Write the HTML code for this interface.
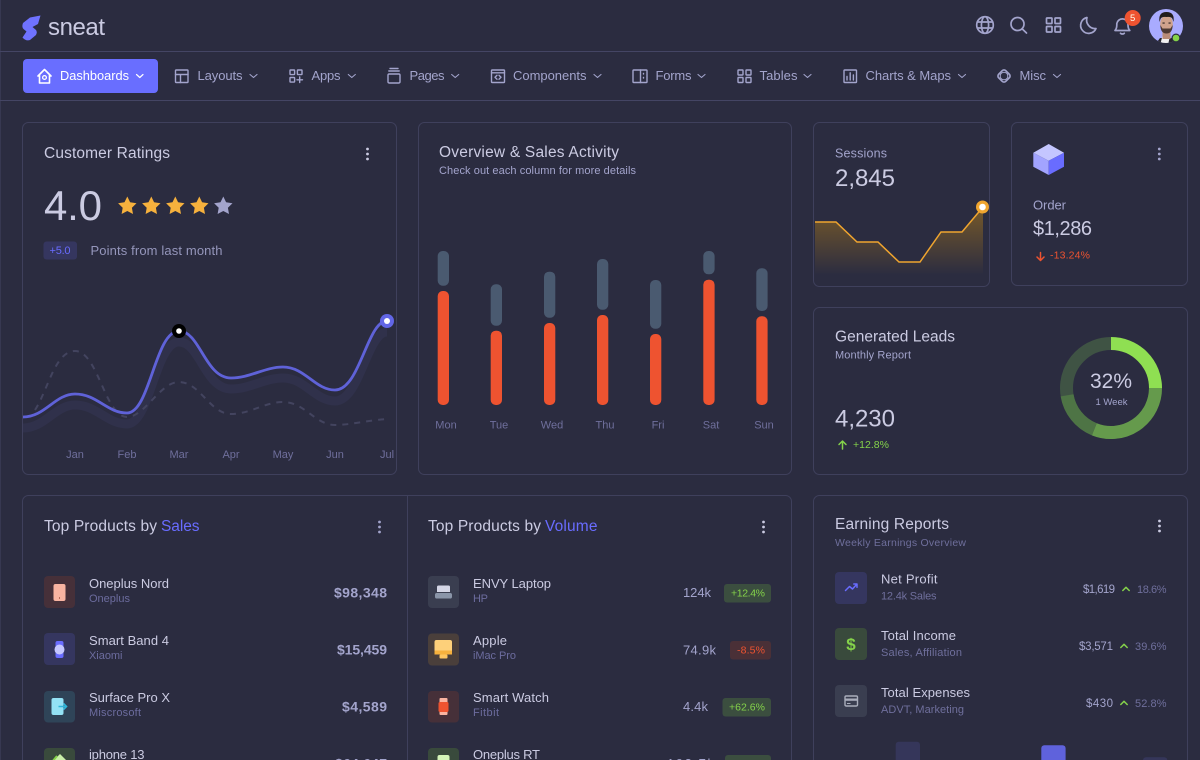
<!DOCTYPE html>
<html lang="en">
<head>
<meta charset="utf-8">
<title>Sneat Dashboard</title>
<style>
html,body{margin:0;padding:0;width:1200px;height:760px;overflow:hidden;background:#2b2c40}
svg{display:block}
text{font-family:"Liberation Sans",sans-serif;fill:#cbcbe2}
.card{fill:#2b2c40;stroke:#3f405c;stroke-width:1}
.nav{font-size:13px;fill:#a3a4cc}
.ic{fill:none;stroke:#a3a4cc;stroke-width:1.4;stroke-linecap:round;stroke-linejoin:round}
.top{fill:none;stroke:#a3a4cc;stroke-width:1.7;stroke-linecap:round;stroke-linejoin:round}
.chev{fill:none;stroke:#a3a4cc;stroke-width:1.1;stroke-linecap:round;stroke-linejoin:round}
.title{font-size:15.5px;fill:#cbcbe2}
.name{font-size:13px;fill:#cbcbe2}
.sub{font-size:11px;fill:#6c6c9e}
.axis{font-size:11px;fill:#6f6f9c}
.price{font-size:14px;font-weight:bold;fill:#a3a4cc}
.val{font-size:13px;fill:#a3a4cc}
.small{font-size:11.5px;fill:#a3a4cc}
.pct{font-size:11px;fill:#6f6f9c}
.g{font-size:10.5px;fill:#84d24a}
.r{font-size:10.5px;fill:#ee5330}
.up{fill:none;stroke:#84d24a;stroke-width:1.5;stroke-linecap:round;stroke-linejoin:round}
</style>
</head>
<body>
<svg width="1200" height="760" viewBox="0 0 1200 760" xmlns="http://www.w3.org/2000/svg">
<defs>
<linearGradient id="amber" x1="0" y1="0" x2="0" y2="1">
<stop offset="0" stop-color="#ffab00" stop-opacity=".36"/>
<stop offset="1" stop-color="#ffab00" stop-opacity="0"/>
</linearGradient>
<clipPath id="c1"><rect x="23" y="260" width="373" height="214"/></clipPath>
<clipPath id="av"><circle cx="1166" cy="26" r="17"/></clipPath>
</defs>

<rect width="1200" height="760" fill="#2b2c40"/>
<rect x="0" y="0" width="1" height="760" fill="#373851"/>
<rect x="0" y="51" width="1200" height="1" fill="#444564"/>
<rect x="0" y="100" width="1200" height="1" fill="#444564"/>

<!-- logo -->
<path d="M30 17.500L40.500 15.500L38 24L32.500 27L36 30Q37.500 32 36 35L30 40Q26 41.500 22.500 37.500L26.500 31.500L23.500 29Q21.500 27 23 23Z" fill="#6f72ff"/>
<text x="48" y="35" font-size="24" textLength="57">sneat</text>

<!-- top icons -->
<g class="top">
<circle cx="985" cy="25" r="8.300"/>
<ellipse cx="985" cy="25" rx="3.600" ry="8.300"/>
<path d="M977.500 22H992.500M977.500 28H992.500"/>
<circle cx="1017.500" cy="24" r="6.500"/>
<path d="M1022.300 29L1026.500 33"/>
<rect x="1046.500" y="18" width="5.500" height="5.500" rx=".6"/>
<rect x="1055" y="18" width="5.500" height="5.500" rx=".6"/>
<rect x="1046.500" y="26.500" width="5.500" height="5.500" rx=".6"/>
<rect x="1055" y="26.500" width="5.500" height="5.500" rx=".6"/>
<path d="M1087 17.500A8 8 0 1 0 1096 28.500A8.500 8.500 0 0 1 1087 17.500Z"/>
<path d="M1115 30.500Q1116.800 28.500 1116.800 25V23.500A5.700 5.700 0 0 1 1128 23.500V25Q1128 28.500 1129.800 30.500ZM1120.500 33.300Q1122.400 34.800 1124.300 33.300"/>
</g>
<circle cx="1132.700" cy="18" r="8" fill="#ee5330"/>
<text x="1132.700" y="21" font-size="9.500" text-anchor="middle" style="fill:#ffe">5</text>

<!-- avatar -->
<circle cx="1166" cy="26" r="17" fill="#a9abff"/>
<g clip-path="url(#av)">
<path d="M1155 45L1160 38H1173L1178 45Z" fill="#26242c"/>
<path d="M1162.500 36L1160 45H1168L1170 36Z" fill="#f0f0f0"/>
<rect x="1162.500" y="30" width="8" height="9" fill="#b98c78"/>
<ellipse cx="1166.500" cy="24" rx="6.300" ry="8.800" fill="#cfa28c"/>
<path d="M1159.500 22Q1158 12 1166.500 12Q1175 12 1173.500 22L1172.500 19Q1171.500 16.500 1166.500 17Q1161.500 16.500 1160.500 19Z" fill="#211c1d"/>
<path d="M1160.300 25Q1160.500 33.500 1166.500 33.500Q1172.500 33.500 1172.700 25L1170.500 28.500H1162.500Z" fill="#4d3a33"/>
<rect x="1162.500" y="22.500" width="2.200" height="1.100" fill="#2a211e"/>
<rect x="1168.500" y="22.500" width="2.200" height="1.100" fill="#2a211e"/>
</g>
<circle cx="1176" cy="38" r="4.500" fill="#2b2c40"/>
<circle cx="1176" cy="38" r="3.300" fill="#84d24a"/>

<!-- nav -->
<rect x="23" y="59" width="135" height="34" rx="4" fill="#696eff"/>
<path d="M38 76L44.500 69.500L51 76M39.500 75V83H49.500V75" fill="none" stroke="#fff" stroke-width="1.600" stroke-linejoin="round" stroke-linecap="round"/>
<circle cx="44.500" cy="77.500" r="1.900" fill="none" stroke="#fff" stroke-width="1.300"/>
<text x="60" y="80" font-size="12.800" textLength="69" style="fill:#fff">Dashboards</text>
<path d="M136.500 74.500L139.800 77.500L143 74.500" fill="none" stroke="#fff" stroke-width="1.200" stroke-linecap="round" stroke-linejoin="round"/>

<g class="ic">
<rect x="175.500" y="70" width="12.500" height="12.500" rx=".8"/><path d="M175.500 74.500H188M180.500 74.500V82.500"/>
<rect x="290" y="70" width="4.600" height="4.600" rx=".5"/><rect x="297.400" y="70" width="4.600" height="4.600" rx=".5"/><rect x="290" y="77.500" width="4.600" height="4.600" rx=".5"/><path d="M299.700 77V82.500M297 79.800H302.500"/>
<path d="M390 68.500H398M388.800 71H399.200"/><rect x="388" y="74" width="12" height="9" rx="1.200"/>
<rect x="491.500" y="70" width="13" height="12.500" rx=".8"/><path d="M491.500 72.800H504.500M497 75.200L495 77.200L497 79.200M499 75.200L501 77.200L499 79.200"/>
<rect x="633" y="70" width="14" height="12.500" rx=".8"/><path d="M640.500 70V82.500M643.500 73.500V74M643.500 77.500V78"/>
<rect x="738" y="70" width="5" height="5" rx=".5"/><rect x="746" y="70" width="5" height="5" rx=".5"/><rect x="738" y="77.500" width="5" height="5" rx=".5"/><rect x="746" y="77.500" width="5" height="5" rx=".5"/>
<rect x="844" y="70" width="12.500" height="12.500" rx=".8"/><path d="M847 80V76.500M850.200 80V72.800M853.400 80V75"/>
<rect x="999" y="71" width="10" height="10" rx="2.500" transform="rotate(45 1004 76)" stroke-width="1.700"/>
<circle cx="1004" cy="76" r="3.800" stroke-width="1"/>
</g>
<text class="nav" x="197.500" y="80" textLength="45">Layouts</text>
<text class="nav" x="311.500" y="80" textLength="29">Apps</text>
<text class="nav" x="409.500" y="80" textLength="35">Pages</text>
<text class="nav" x="513" y="80" textLength="73.500">Components</text>
<text class="nav" x="655.500" y="80" textLength="36">Forms</text>
<text class="nav" x="759.500" y="80" textLength="38">Tables</text>
<text class="nav" x="865.500" y="80" textLength="85.500">Charts &amp; Maps</text>
<text class="nav" x="1019.500" y="80" textLength="26.500">Misc</text>
<g class="chev">
<path d="M250 74.500L253.500 77.500L257 74.500M348.300 74.500L351.800 77.500L355.300 74.500M451.700 74.500L455.200 77.500L458.700 74.500M594 74.500L597.500 77.500L601 74.500M698 74.500L701.500 77.500L705 74.500M804 74.500L807.500 77.500L811 74.500M958.500 74.500L962 77.500L965.500 74.500M1053.500 74.500L1057 77.500L1060.500 74.500"/>
</g>

<!-- cards -->
<rect class="card" x="22.500" y="122.500" width="374" height="352" rx="6"/>
<rect class="card" x="418.500" y="122.500" width="373" height="352" rx="6"/>
<rect class="card" x="813.500" y="122.500" width="176" height="164" rx="6"/>
<rect class="card" x="1011.500" y="122.500" width="176" height="163" rx="6"/>
<rect class="card" x="813.500" y="307.500" width="374" height="167" rx="6"/>
<rect class="card" x="22.500" y="495.500" width="769" height="290" rx="6"/>
<rect x="407" y="496" width="1" height="264" fill="#3f405c"/>
<rect class="card" x="813.500" y="495.500" width="374" height="290" rx="6"/>

<!-- customer ratings -->
<text class="title" x="44" y="158" textLength="126">Customer Ratings</text>
<g fill="#cbcbe2"><circle cx="367.500" cy="149" r="1.400"/><circle cx="367.500" cy="154" r="1.400"/><circle cx="367.500" cy="159" r="1.400"/></g>
<text x="44" y="220" font-size="42" textLength="58">4.0</text>
<g>
<path d="M127.300 196.500L130.100 202.300L136.500 203.200L131.900 207.700L133 214L127.300 211L121.600 214L122.700 207.700L118.100 203.200L124.500 202.300Z" fill="#f6b13d"/>
<path transform="translate(24 0)" d="M127.300 196.500L130.100 202.300L136.500 203.200L131.900 207.700L133 214L127.300 211L121.600 214L122.700 207.700L118.100 203.200L124.500 202.300Z" fill="#f6b13d"/>
<path transform="translate(48 0)" d="M127.300 196.500L130.100 202.300L136.500 203.200L131.900 207.700L133 214L127.300 211L121.600 214L122.700 207.700L118.100 203.200L124.500 202.300Z" fill="#f6b13d"/>
<path transform="translate(72 0)" d="M127.300 196.500L130.100 202.300L136.500 203.200L131.900 207.700L133 214L127.300 211L121.600 214L122.700 207.700L118.100 203.200L124.500 202.300Z" fill="#f6b13d"/>
<path transform="translate(96 0)" d="M127.300 196.500L130.100 202.300L136.500 203.200L131.900 207.700L133 214L127.300 211L121.600 214L122.700 207.700L118.100 203.200L124.500 202.300Z" fill="#a3a4cc"/>
</g>
<rect x="43.500" y="241.500" width="33.500" height="18" rx="3" fill="#35365f"/>
<text x="49.500" y="254" font-size="11" textLength="21" style="fill:#696cff">+5.0</text>
<text x="90.500" y="255" font-size="13" textLength="132" style="fill:#9596bb">Points from last month</text>

<g clip-path="url(#c1)">
<path d="M23 417C45 417 55 394 75 394C97 394 107 413 127 413C150 413 155 331 179 331C200 331 205 378 231 378C250 378 265 367 283 367C305 367 315 390 335 390C360 390 367 321 387 321" transform="translate(0 11)" fill="none" stroke="#30314b" stroke-width="9"/>
<path d="M35 410C48 390 55 351 75 351C98 351 105 417 127 417C145 417 160 382 179 382C200 382 210 414 231 414C250 414 265 402 283 402C305 402 315 425 335 425C350 425 370 420 387 419" fill="none" stroke="#43445f" stroke-width="2" stroke-dasharray="6 6"/>
<path d="M23 417C45 417 55 394 75 394C97 394 107 413 127 413C150 413 155 331 179 331C200 331 205 378 231 378C250 378 265 367 283 367C305 367 315 390 335 390C360 390 367 321 387 321" fill="none" stroke="#5f62d8" stroke-width="2.800"/>
</g>
<circle cx="179" cy="331" r="7" fill="#000"/><circle cx="179" cy="331" r="2.800" fill="#fff"/>
<circle cx="387" cy="321" r="7" fill="#6266e6"/><circle cx="387" cy="321" r="3" fill="#fff"/>
<g text-anchor="middle">
<text class="axis" x="75" y="458">Jan</text><text class="axis" x="127" y="458">Feb</text><text class="axis" x="179" y="458">Mar</text><text class="axis" x="231" y="458">Apr</text><text class="axis" x="283" y="458">May</text><text class="axis" x="335" y="458">Jun</text><text class="axis" x="387" y="458">Jul</text>
</g>

<!-- overview -->
<text class="title" x="439" y="157" textLength="180">Overview &amp; Sales Activity</text>
<text x="439" y="174" font-size="11" textLength="197" style="fill:#a3a4cc">Check out each column for more details</text>
<g fill="#4a5a70">
<rect x="437.700" y="251" width="11.300" height="34.700" rx="5"/>
<rect x="490.700" y="284.300" width="11.300" height="41.400" rx="5"/>
<rect x="544" y="271.700" width="11.300" height="46" rx="5"/>
<rect x="597" y="259" width="11.300" height="50.700" rx="5"/>
<rect x="650" y="280" width="11.300" height="48.700" rx="5"/>
<rect x="703.300" y="251" width="11.300" height="23.300" rx="5"/>
<rect x="756.300" y="268.300" width="11.300" height="42.700" rx="5"/>
</g>
<g fill="#ee5330">
<rect x="437.700" y="291" width="11.300" height="114" rx="5"/>
<rect x="490.700" y="330.700" width="11.300" height="74.300" rx="5"/>
<rect x="544" y="323" width="11.300" height="82" rx="5"/>
<rect x="597" y="315" width="11.300" height="90" rx="5"/>
<rect x="650" y="334" width="11.300" height="71" rx="5"/>
<rect x="703.300" y="279.700" width="11.300" height="125.300" rx="5"/>
<rect x="756.300" y="316.300" width="11.300" height="88.700" rx="5"/>
</g>
<g text-anchor="middle">
<text class="axis" x="446" y="428.500">Mon</text><text class="axis" x="499" y="428.500">Tue</text><text class="axis" x="552" y="428.500">Wed</text><text class="axis" x="605" y="428.500">Thu</text><text class="axis" x="658" y="428.500">Fri</text><text class="axis" x="711" y="428.500">Sat</text><text class="axis" x="764" y="428.500">Sun</text>
</g>

<!-- sessions -->
<text x="835" y="157.500" font-size="12.500" textLength="52" style="fill:#a3a4cc">Sessions</text>
<text x="835" y="186" font-size="24" textLength="60">2,845</text>
<path d="M815 222H836L857 242H878L899 262H920L941 232H962L983 207V275H815Z" fill="url(#amber)"/>
<path d="M815 222H836L857 242H878L899 262H920L941 232H962L983 207" fill="none" stroke="#f0a52f" stroke-width="1.500"/>
<circle cx="982.500" cy="207" r="6.500" fill="#f0a52f"/><circle cx="982.500" cy="207" r="3.300" fill="#fff"/>

<!-- order -->
<path d="M1048.700 144L1064 152.700L1048.700 160.700L1033.300 152.700Z" fill="#c4c6ff"/>
<path d="M1033.300 152.700L1048.700 160.700V175L1033.300 166.700Z" fill="#a2a4ff"/>
<path d="M1064 152.700L1048.700 160.700V175L1064 166.700Z" fill="#696cff"/>
<g fill="#a3a4cc"><circle cx="1159.300" cy="149" r="1.400"/><circle cx="1159.300" cy="154" r="1.400"/><circle cx="1159.300" cy="159" r="1.400"/></g>
<text x="1033" y="209.500" font-size="13" textLength="33" style="fill:#a3a4cc">Order</text>
<text x="1033" y="235" font-size="20" textLength="59">$1,286</text>
<path d="M1040.500 252.500V260.500M1037 257L1040.500 260.500L1044 257" fill="none" stroke="#ee5330" stroke-width="1.500" stroke-linecap="round" stroke-linejoin="round"/>
<text class="r" x="1050" y="258.700" textLength="40">-13.24%</text>

<!-- leads -->
<text class="title" x="835" y="341.700" textLength="120">Generated Leads</text>
<text x="835" y="358.700" font-size="11" textLength="76" style="fill:#a3a4cc">Monthly Report</text>
<text x="835" y="426.700" font-size="24" textLength="60">4,230</text>
<path d="M842.500 449V441M839 444.500L842.500 441L846 444.500" class="up"/>
<text class="g" x="853" y="448" textLength="36">+12.8%</text>
<g fill="none" stroke-width="13">
<circle cx="1111" cy="388" r="44.500" stroke="#3f5344"/>
<path d="M1111 343.500A44.500 44.500 0 0 1 1155.500 388" stroke="#8fdf52"/>
<path d="M1155.500 388A44.500 44.500 0 0 1 1094.300 429.300" stroke="#659a4c"/>
<path d="M1094.300 429.300A44.500 44.500 0 0 1 1067.100 395.300" stroke="#4e7445"/>
</g>
<text x="1090" y="388" font-size="21" textLength="42">32%</text>
<text x="1111.500" y="405" font-size="9.500" text-anchor="middle" style="fill:#a3a4cc">1 Week</text>

<!-- top products -->
<text class="title" x="44" y="531" textLength="113">Top Products by</text>
<text class="title" x="161" y="531" textLength="38.500" style="fill:#696cff">Sales</text>
<g fill="#a3a4cc"><circle cx="379.500" cy="522" r="1.400"/><circle cx="379.500" cy="527" r="1.400"/><circle cx="379.500" cy="532" r="1.400"/></g>
<text class="title" x="428" y="531" textLength="113">Top Products by</text>
<text class="title" x="545" y="531" textLength="52.500" style="fill:#696cff">Volume</text>
<g fill="#cbcbe2"><circle cx="763.500" cy="522" r="1.400"/><circle cx="763.500" cy="527" r="1.400"/><circle cx="763.500" cy="532" r="1.400"/></g>

<rect x="44" y="576" width="31" height="32" rx="4" fill="#463039"/>
<rect x="53.500" y="584" width="12" height="17" rx="2" fill="#f9b4a1"/><rect x="59" y="597" width="1" height="2" fill="#b96b58"/>
<rect x="44" y="633" width="31" height="32" rx="4" fill="#35365f"/>
<rect x="55.500" y="641" width="8" height="17" rx="2" fill="#696cff"/><circle cx="59.500" cy="649.500" r="5" fill="#c4c6ff"/>
<rect x="44" y="691" width="31" height="31.500" rx="4" fill="#2f4458"/>
<rect x="51.500" y="698" width="12" height="17" rx="2" fill="#93e2f5"/><path d="M58.500 706.500H66M63.500 703.500L66.500 706.500L63.500 709.500" fill="none" stroke="#30b6d9" stroke-width="1.600"/>
<rect x="44" y="748" width="31" height="32" rx="4" fill="#394a3c"/>
<path d="M52 762L60 754L68 762Z" fill="#c9efa8"/><path d="M52 762L57 756" stroke="#84d24a" stroke-width="2"/>

<text class="name" x="89" y="588" textLength="80">Oneplus Nord</text><text class="sub" x="89" y="602" textLength="41">Oneplus</text>
<text class="name" x="89" y="645" textLength="80">Smart Band 4</text><text class="sub" x="89" y="659" textLength="33.500">Xiaomi</text>
<text class="name" x="89" y="702" textLength="81">Surface Pro X</text><text class="sub" x="89" y="716" textLength="52">Miscrosoft</text>
<text class="name" x="89" y="759" textLength="55.500">iphone 13</text>
<text class="price" x="334" y="597.500" textLength="53">$98,348</text>
<text class="price" x="337" y="654.500" textLength="50">$15,459</text>
<text class="price" x="342" y="711.500" textLength="45">$4,589</text>
<text class="price" x="335" y="768.500" textLength="52">$64,647</text>

<rect x="428" y="576" width="31" height="32" rx="4" fill="#3a3e50"/>
<path d="M437 592V587Q437 585.500 438.500 585.500H448.500Q450 585.500 450 587V592Z" fill="#d4d6e6"/><rect x="435" y="593" width="17" height="5.500" rx="1.800" fill="#8a95a8"/>
<rect x="428" y="633.500" width="31" height="32" rx="4" fill="#4a3f3b"/>
<path d="M434.500 642Q434.500 640 436.500 640H450Q452 640 452 642V650.500H434.500Z" fill="#fdd07a"/><rect x="434.500" y="650.500" width="17.500" height="4" fill="#f6b13d"/><rect x="439.500" y="654.500" width="8" height="4" rx="1" fill="#fdc560"/>
<rect x="428" y="691" width="31" height="31.500" rx="4" fill="#463039"/>
<rect x="439.500" y="698" width="8" height="17" rx="1" fill="#f9b4a1"/><rect x="438.500" y="702" width="10" height="10" rx="1.500" fill="#ee5330"/>
<rect x="428" y="748" width="31" height="32" rx="4" fill="#394a3c"/>
<rect x="437.500" y="755" width="12" height="15" rx="2" fill="#d4f5b8"/>

<text class="name" x="473" y="588" textLength="78">ENVY Laptop</text><text class="sub" x="473" y="602" textLength="15">HP</text>
<text class="name" x="473" y="645" textLength="34">Apple</text><text class="sub" x="473" y="659" textLength="43">iMac Pro</text>
<text class="name" x="473" y="702" textLength="76">Smart Watch</text><text class="sub" x="473" y="716" textLength="26">Fitbit</text>
<text class="name" x="473" y="759" textLength="67">Oneplus RT</text>
<text class="val" x="683" y="597" textLength="28">124k</text>
<text class="val" x="683" y="654.500" textLength="33">74.9k</text>
<text class="val" x="683" y="711" textLength="25">4.4k</text>
<text class="val" x="667" y="768" textLength="47">192.7k</text>
<rect x="724" y="584" width="47" height="18.500" rx="3" fill="#3b4e3f"/><text class="g" x="731" y="596.700" textLength="34">+12.4%</text>
<rect x="730" y="641" width="41" height="18.500" rx="3" fill="#4a3037"/><text class="r" x="737" y="653.700" textLength="28">-8.5%</text>
<rect x="722.500" y="698" width="48.500" height="18.500" rx="3" fill="#3b4e3f"/><text class="g" x="729" y="710.700" textLength="36">+62.6%</text>
<rect x="725" y="755" width="46" height="18.500" rx="3" fill="#3b4e3f"/>

<!-- earning -->
<text class="title" x="835" y="529" textLength="114">Earning Reports</text>
<text x="835" y="546" font-size="10.500" textLength="131" style="fill:#6f6f9c">Weekly Earnings Overview</text>
<g fill="#cbcbe2"><circle cx="1159.500" cy="521" r="1.400"/><circle cx="1159.500" cy="526" r="1.400"/><circle cx="1159.500" cy="531" r="1.400"/></g>

<rect x="835" y="572" width="32" height="32" rx="4" fill="#35365f"/>
<path d="M845.500 590.500L849.500 586.500L852.500 589L857 584M853.800 584H857V587.200" fill="none" stroke="#696cff" stroke-width="1.500" stroke-linecap="round" stroke-linejoin="round"/>
<rect x="835" y="628" width="32" height="32" rx="4" fill="#394a3c"/>
<text x="851" y="650" font-size="17" font-weight="bold" text-anchor="middle" style="fill:#84d24a">$</text>
<rect x="835" y="685" width="32" height="32" rx="4" fill="#3a3e50"/>
<rect x="845" y="696" width="12.500" height="10" rx="1.200" fill="none" stroke="#a9adbb" stroke-width="1.400"/><rect x="845" y="698.500" width="12.500" height="2.300" fill="#a9adbb"/><rect x="847" y="703" width="3.500" height="1" fill="#a9adbb"/>

<text class="name" x="881" y="583.300" textLength="56.500">Net Profit</text><text class="sub" x="881" y="599.300" textLength="55.500" style="fill:#6f6f9c">12.4k Sales</text>
<text class="name" x="881" y="640" textLength="75">Total Income</text><text class="sub" x="881" y="656" textLength="81" style="fill:#6f6f9c">Sales, Affiliation</text>
<text class="name" x="881" y="697" textLength="89">Total Expenses</text><text class="sub" x="881" y="713" textLength="83" style="fill:#6f6f9c">ADVT, Marketing</text>

<text class="small" x="1083" y="593" textLength="32">$1,619</text>
<path d="M1122.800 590.500L1126 587.300L1129.200 590.500" class="up"/>
<text class="pct" x="1137" y="593" textLength="29.500">18.6%</text>
<text class="small" x="1079" y="650" textLength="34">$3,571</text>
<path d="M1120.800 647.500L1124 644.300L1127.200 647.500" class="up"/>
<text class="pct" x="1135" y="650" textLength="31.500">39.6%</text>
<text class="small" x="1086" y="707" textLength="27">$430</text>
<path d="M1120.800 704.500L1124 701.300L1127.200 704.500" class="up"/>
<text class="pct" x="1135" y="707" textLength="31.500">52.8%</text>

<rect x="895.700" y="741.700" width="24.300" height="30" rx="3" fill="#35365a"/>
<rect x="1041.300" y="745.300" width="24.300" height="30" rx="3" fill="#5f62dc"/>
<rect x="1143" y="757.300" width="24.300" height="20" rx="3" fill="#35365a"/>
</svg>
</body>
</html>
